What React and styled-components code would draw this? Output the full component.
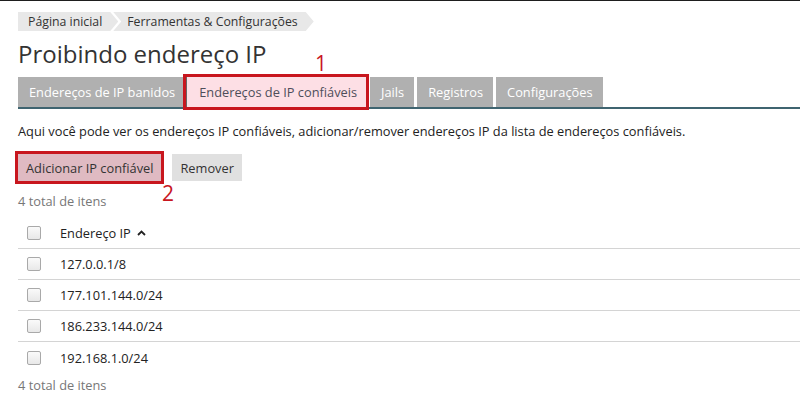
import React from 'react';
import styled, { createGlobalStyle } from 'styled-components';

const GlobalStyle = createGlobalStyle`
  html, body {
    margin: 0;
    padding: 0;
    background: #fff;
  }
  body {
    font-family: "Open Sans", "Liberation Sans", sans-serif;
    color: #333;
  }
`;

const Page = styled.div`
  width: 800px;
  height: 406px;
  overflow: hidden;
  border-top: 1px solid #1e1e1e;
  box-sizing: border-box;
  padding: 11px 0 0 18px;
`;

const Breadcrumbs = styled.nav`
  display: flex;
  height: 19px;
`;

const Crumb = styled.div`
  display: flex;
  align-items: center;
  background: #e8e8e8;
  font-size: 12.3px;
  color: #333;
  padding: 0 16px 0 ${(p) => (p.$first ? '10px' : '14px')};
  margin-left: ${(p) => (p.$first ? '0' : '-5px')};
  clip-path: ${(p) =>
    p.$first
      ? 'polygon(0 0, calc(100% - 8px) 0, 100% 50%, calc(100% - 8px) 100%, 0 100%)'
      : 'polygon(0 0, calc(100% - 8px) 0, 100% 50%, calc(100% - 8px) 100%, 0 100%, 8px 50%)'};
`;

const TitleRow = styled.div`
  position: relative;
`;

const Title = styled.h1`
  margin: 7px 0 0;
  font-size: 24px;
  font-weight: 400;
  line-height: 32px;
  color: #333;
`;

const Marker = styled.span`
  position: absolute;
  color: #c8161e;
  font-size: 21px;
  line-height: 20px;
  font-family: "Open Sans", "Liberation Sans", sans-serif;
`;

const TabStrip = styled.div`
  display: flex;
  gap: 3px;
  margin-top: 7px;
  border-bottom: 2px solid #3f6470;
  position: relative;
`;

const Tab = styled.div`
  height: 30px;
  display: flex;
  align-items: center;
  padding: 0 10px 0 11px;
  font-size: 12.8px;
  white-space: nowrap;
  background: ${(p) => (p.$active ? '#fddfe5' : '#b0b0b0')};
  color: ${(p) => (p.$active ? '#4e4e5a' : '#fff')};
  position: relative;
  ${(p) =>
    p.$active &&
    `
    margin: 0 1px 0 -2px;
    padding: 0 9px 0 12px;
    outline: 3px solid #c8161e;
    outline-offset: 0px;
    border-left: 1px solid #666;
  `}
`;

const Description = styled.p`
  margin: 14px 0 0;
  font-size: 12.8px;
  color: #222;
  line-height: 17px;
`;

const Toolbar = styled.div`
  display: flex;
  gap: 11px;
  margin-top: 14px;
  position: relative;
`;

const Button = styled.button`
  height: 27px;
  padding: 0 8px;
  border: none;
  font-family: inherit;
  font-size: 12.8px;
  color: #333;
  background: ${(p) => (p.$marked ? '#dfbac2' : '#e0e0e0')};
  ${(p) => p.$marked && 'outline: 3px solid #c8161e; outline-offset: 0;'}
`;

const Count = styled.div`
  font-size: 12.8px;
  color: #777;
  line-height: 17px;
  margin-top: ${(p) => p.$top || '12px'};
`;

const Table = styled.div`
  margin-top: 8px;
`;

const Row = styled.div`
  display: flex;
  align-items: center;
  height: 31px;
  box-sizing: border-box;
  border-bottom: ${(p) => (p.$last ? 'none' : '1px solid #d4d4d4')};
  font-size: 12.8px;
  color: #222;
`;

const Check = styled.span`
  width: 12px;
  height: 12px;
  border: 1px solid #a9a9a9;
  border-radius: 2px;
  background: linear-gradient(#fafafa, #e8e8e8);
  margin: 0 19px 0 9px;
  flex: none;
`;

const SortArrow = styled.svg`
  margin-left: 6px;
  vertical-align: middle;
`;

const ips = ['127.0.0.1/8', '177.101.144.0/24', '186.233.144.0/24', '192.168.1.0/24'];

export default function App() {
  return (
    <>
      <GlobalStyle />
      <Page>
        <Breadcrumbs>
          <Crumb $first>Página inicial</Crumb>
          <Crumb>Ferramentas &amp; Configurações</Crumb>
        </Breadcrumbs>
        <TitleRow>
          <Title>Proibindo endereço IP</Title>
          <Marker style={{ left: 297, top: 15 }}>1</Marker>
        </TitleRow>
        <TabStrip>
          <Tab>Endereços de IP banidos</Tab>
          <Tab $active>Endereços de IP confiáveis</Tab>
          <Tab>Jails</Tab>
          <Tab>Registros</Tab>
          <Tab>Configurações</Tab>
        </TabStrip>
        <Description>
          Aqui você pode ver os endereços IP confiáveis, adicionar/remover endereços IP da lista de endereços confiáveis.
        </Description>
        <Toolbar>
          <Button $marked>Adicionar IP confiável</Button>
          <Button>Remover</Button>
          <Marker style={{ left: 144, top: 29 }}>2</Marker>
        </Toolbar>
        <Count>4 total de itens</Count>
        <Table>
          <Row>
            <Check />
            Endereço IP
            <SortArrow width="9" height="6" viewBox="0 0 9 6">
              <path d="M1 5 L4.5 1.5 L8 5" fill="none" stroke="#222" strokeWidth="1.8" />
            </SortArrow>
          </Row>
          {ips.map((ip, i) => (
            <Row key={ip} $last={i === ips.length - 1}>
              <Check />
              {ip}
            </Row>
          ))}
        </Table>
        <Count $top="4px">4 total de itens</Count>
      </Page>
    </>
  );
}
